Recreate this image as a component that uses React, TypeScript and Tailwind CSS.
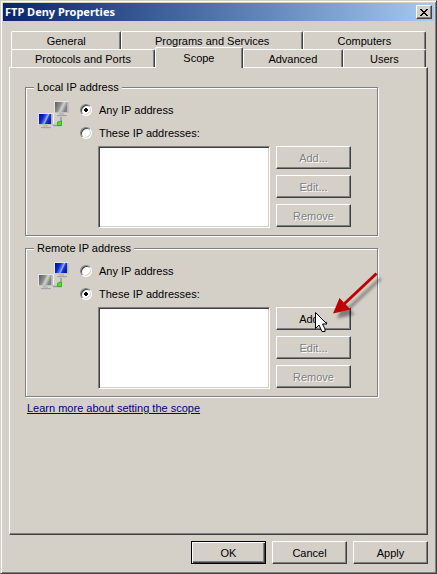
import { ReactNode, useState } from 'react';

const tabRows = [
  [
    { name: 'General', grow: 'flex-[110]' },
    { name: 'Programs and Services', grow: 'flex-[182]' },
    { name: 'Computers', grow: 'flex-[123]' },
  ],
  [
    { name: 'Protocols and Ports', grow: 'flex-[145]' },
    { name: 'Scope', grow: 'flex-[88]' },
    { name: 'Advanced', grow: 'flex-[100]' },
    { name: 'Users', grow: 'flex-[83]' },
  ],
];

type ButtonProps = {
  children: ReactNode;
  disabled?: boolean;
  primary?: boolean;
};

function DialogButton({ children, disabled, primary }: ButtonProps) {
  const edge = primary
    ? 'border-black shadow-[inset_1px_1px_0_#fff,inset_-1px_-1px_0_#404040,inset_-2px_-2px_0_#808080]'
    : 'border-t-white border-l-white border-r-[#404040] border-b-[#404040] shadow-[inset_-1px_-1px_0_#808080]';

  return (
    <button
      type="button"
      disabled={disabled}
      className={`h-[23px] w-[75px] shrink-0 border bg-[#d4d0c8] text-center disabled:text-[#808080] disabled:[text-shadow:1px_1px_0_#fff] ${edge}`}
    >
      {children}
    </button>
  );
}

function Monitor({ x, y, active }: { x: number; y: number; active: boolean }) {
  return (
    <g transform={`translate(${x} ${y})`}>
      <rect width="15" height="12" fill="#b4b4b4" />
      <path d="M0 0h15v1H1v11H0z" fill="#e4e4e4" />
      <path d="M14 1h1v11H1v-1h13z" fill="#c0c0c0" />
      <rect
        x="1"
        y="1"
        width="12"
        height="10"
        fill={active ? 'url(#blueScreen)' : 'url(#grayScreen)'}
      />
      <rect x="5" y="12" width="5" height="2" fill="#bcbcbc" />
      <rect x="3" y="14" width="10" height="1" fill="#a4a4a4" />
      <rect x="4" y="15" width="8" height="1" fill="#c8c8c8" />
    </g>
  );
}

function NetworkIcon({ local }: { local: boolean }) {
  return (
    <svg width="32" height="29" viewBox="0 0 32 29" aria-hidden="true">
      <defs>
        <linearGradient id="blueScreen" x1="0" y1="0" x2="1" y2="0.4">
          <stop offset="0" stopColor="#000c90" />
          <stop offset="0.4" stopColor="#0c28d0" />
          <stop offset="0.6" stopColor="#5070f0" />
          <stop offset="0.7" stopColor="#a0b0f4" />
          <stop offset="0.8" stopColor="#2040d0" />
          <stop offset="1" stopColor="#0820a8" />
        </linearGradient>
        <linearGradient id="grayScreen" x1="0" y1="0" x2="1" y2="0.4">
          <stop offset="0" stopColor="#5c5c5c" />
          <stop offset="0.45" stopColor="#8a8a8a" />
          <stop offset="0.7" stopColor="#d0d0d0" />
          <stop offset="1" stopColor="#808080" />
        </linearGradient>
      </defs>
      <path d="M15 24.500h8V15" fill="none" stroke="#999" strokeWidth="1.500" />
      <path d="M15.500 12v11" fill="none" stroke="#f0f0f0" />
      <Monitor x={16} y={0} active={!local} />
      <Monitor x={0} y={12} active={local} />
      <path d="M19.500 21l4-1v4.500h-4z" fill="#38f010" stroke="#3a9a30" strokeWidth="0.8" />
    </svg>
  );
}

type ScopeGroupProps = {
  title: string;
  id: string;
  initial: 'any' | 'these';
  addPointer?: ReactNode;
};

function ScopeGroup({ title, id, initial, addPointer }: ScopeGroupProps) {
  const [choice, setChoice] = useState(initial);
  const choices = [
    { value: 'any', label: 'Any IP address' },
    { value: 'these', label: 'These IP addresses:' },
  ] as const;

  return (
    <fieldset className="border border-[#808080] pr-[26px] pb-[7px] pl-3 shadow-[1px_1px_0_#fff,inset_1px_1px_0_#fff]">
      <legend className="-ml-1 bg-[#d4d0c8] px-[3px] leading-[14px]">
        {title}
      </legend>
      <div className="flex pt-[7px]">
        <div className="w-[42px] shrink-0">
          <NetworkIcon local={id === 'local'} />
        </div>
        <div className="flex flex-col gap-[9px] pt-[2px]">
          {choices.map(({ value, label }) => (
            <label key={value} className="flex items-center gap-[7px] leading-[14px]">
              <input
                type="radio"
                name={id}
                checked={choice === value}
                onChange={() => setChoice(value)}
                className="size-3 appearance-none rounded-full border border-t-[#808080] border-r-white border-b-white border-l-[#808080] bg-white shadow-[inset_1px_1px_0_#404040,inset_-1px_-1px_0_#d4d0c8] checked:bg-[radial-gradient(circle,#000_2px,#fff_2px)]"
              />
              {label}
            </label>
          ))}
        </div>
      </div>
      <div className="mt-[6px] ml-[60px] flex gap-[6px]">
        <select
          multiple
          aria-label={`${title} list`}
          className="h-[82px] min-w-0 flex-1 appearance-none border border-t-[#808080] border-r-white border-b-white border-l-[#808080] bg-white shadow-[inset_1px_1px_0_#404040,inset_-1px_-1px_0_#d4d0c8]"
        />
        <div className="flex flex-col gap-[6px]">
          <div className="relative">
            <DialogButton disabled={initial === 'any'}>Add...</DialogButton>
            {addPointer}
          </div>
          <DialogButton disabled>Edit...</DialogButton>
          <DialogButton disabled>Remove</DialogButton>
        </div>
      </div>
    </fieldset>
  );
}

function Pointer() {
  return (
    <svg
      className="pointer-events-none absolute -top-10 left-9"
      width="75"
      height="68"
      viewBox="0 0 75 68"
      aria-hidden="true"
    >
      <defs>
        <filter id="arrowShadow" x="-20%" y="-20%" width="150%" height="150%">
          <feDropShadow dx="4" dy="5" stdDeviation="1.500" floodColor="#000" floodOpacity="0.4" />
        </filter>
      </defs>
      <g filter="url(#arrowShadow)">
        <path d="M21 46.500L27.500 31L38.500 42.500Z" fill="#c00000" />
        <path d="M64.500 6.500L31 38" stroke="#c00000" strokeWidth="3" />
      </g>
      <path
        d="M3.500 45.500v16l3.500-3.500l3 6.500h3v-2.500l-2.500-5h4.500z"
        fill="#fff"
        stroke="#000"
      />
    </svg>
  );
}

export default function App() {
  const [tab, setTab] = useState('Scope');

  return (
    <div className="flex min-h-screen flex-col border border-t-[#d4d0c8] border-r-[#404040] border-b-[#404040] border-l-[#d4d0c8] bg-[#d4d0c8] p-[2px] font-['Liberation_Sans',sans-serif] text-[11px] leading-[14px] text-black shadow-[inset_1px_1px_0_#fff,inset_-1px_-1px_0_#808080]">
      <header className="flex h-[18px] items-center justify-between bg-linear-to-r from-[#0a246a] to-[#a6caf0] px-[2px]">
        <h1 className="font-['Noto_Sans',sans-serif] text-[11px] font-bold text-white">
          FTP Deny Properties
        </h1>
        <button
          type="button"
          aria-label="Close"
          className="flex h-[14px] w-4 items-center justify-center border border-t-white border-r-[#404040] border-b-[#404040] border-l-white bg-[#d4d0c8] shadow-[inset_-1px_-1px_0_#808080]"
        >
          <svg width="8" height="7" viewBox="0 0 8 7" shapeRendering="crispEdges">
            <path
              d="M0 0h2v1h1v1h2v-1h1v-1h2v1h-1v1h-1v1h-1v1h1v1h1v1h1v1h-2v-1h-1v-1h-2v1h-1v1h-2v-1h1v-1h1v-1h1v-1h-1v-1h-1v-1h-1z"
              fill="#000"
            />
          </svg>
        </button>
      </header>

      <main className="flex flex-1 flex-col px-[6px] pt-[10px] pb-[7px]">
        <nav className="px-[2px]">
          {tabRows.map((row, i) => (
            <div key={i} className="flex h-[18px]">
              {row.map(({ name, grow }) => (
                <button
                  key={name}
                  type="button"
                  onClick={() => setTab(name)}
                  className={`${grow} rounded-t-[2px] border border-b-0 border-t-white border-r-[#404040] border-l-white bg-[#d4d0c8] shadow-[inset_-1px_0_0_#808080] ${
                    tab === name ? 'relative z-10 -mt-[2px] -mb-px pb-px' : ''
                  }`}
                >
                  {name}
                </button>
              ))}
            </div>
          ))}
        </nav>

        <section className="flex-1 border border-t-white border-r-[#404040] border-b-[#404040] border-l-white pt-3 pr-[49px] pl-[15px] shadow-[inset_-1px_-1px_0_#808080]">
          <div className="flex flex-col gap-[5px]">
            <ScopeGroup title="Local IP address" id="local" initial="any" />
            <ScopeGroup
              title="Remote IP address"
              id="remote"
              initial="these"
              addPointer={<Pointer />}
            />
          </div>
          <a href="#scope" className="mt-1 ml-[2px] inline-block text-[#000080] underline">
            Learn more about setting the scope
          </a>
        </section>

        <footer className="flex justify-end gap-[6px] pt-[6px]">
          <DialogButton primary>OK</DialogButton>
          <DialogButton>Cancel</DialogButton>
          <DialogButton>Apply</DialogButton>
        </footer>
      </main>
    </div>
  );
}
